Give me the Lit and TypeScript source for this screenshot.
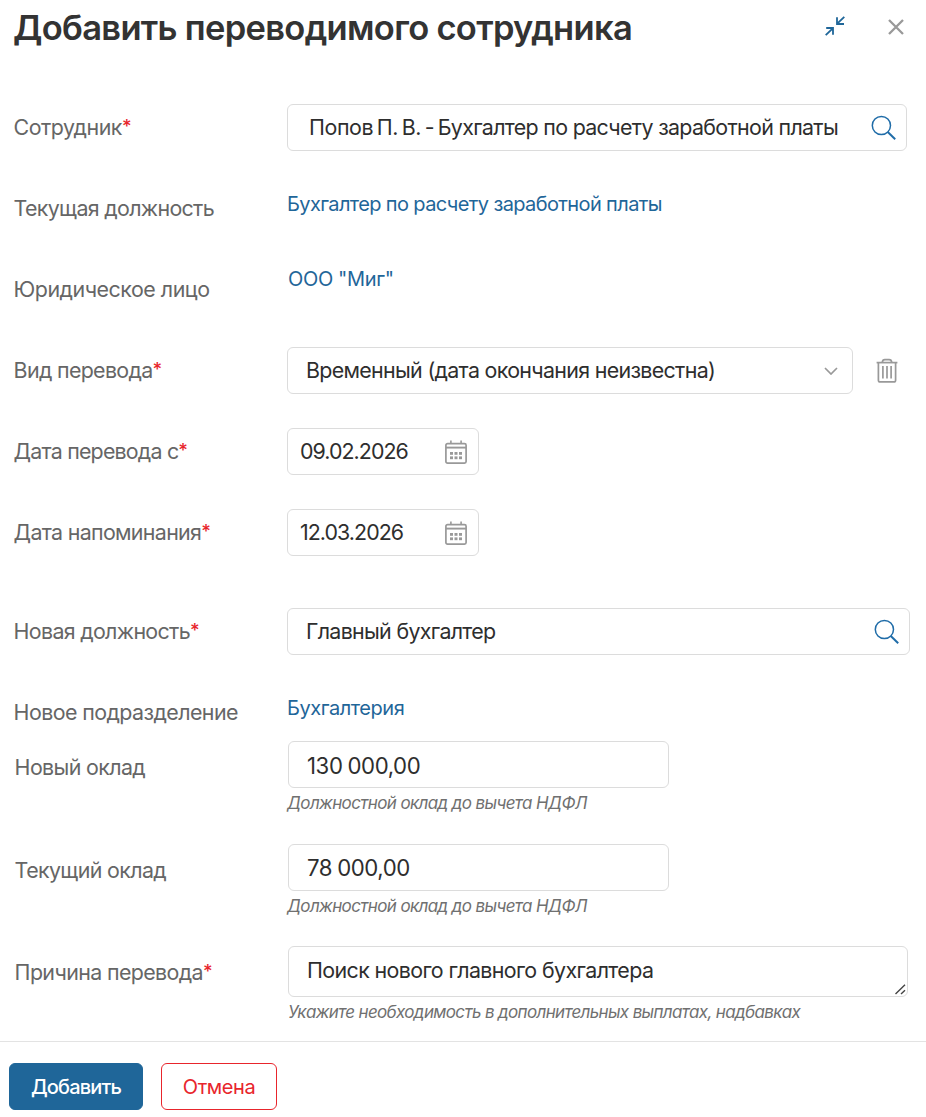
import { LitElement, html, css, svg } from "lit";
import { customElement } from "lit/decorators.js";

const searchIcon = html`<svg class="icon search" width="26" height="26" viewBox="0 0 26 26" fill="none" stroke="currentColor">
  <circle cx="10.4" cy="10.5" r="9.1" stroke-width="1.5" />
  <path d="M16.8 17L24.2 24.2" stroke-width="2" />
</svg>`;

const dots = [0, 1, 2].map((c) => [0, 1].map((r) => svg`<rect x=${5 + c * 4.5} y=${12 + r * 4.4} width="3" height="2.8" />`));
const calendarIcon = html`<svg class="icon calendar" width="22" height="25" viewBox="0 0 22 25" fill="none" stroke="currentColor">
  <rect x="0.9" y="3.6" width="20.2" height="19.6" rx="1.6" stroke-width="1.7" />
  <path d="M1 7.6H21" stroke-width="1.9" />
  <path d="M5.9 0.5V4M16.1 0.5V4" stroke-width="1.6" />
  <g fill="currentColor" stroke="none">${dots}</g>
</svg>`;

const trashIcon = html`<svg class="icon trash" width="22" height="26" viewBox="0 0 22 26" fill="none" stroke="currentColor" stroke-width="1.7">
  <path d="M0.6 4.6H21.4" />
  <path d="M6.3 4.4C6.5 2.3 7.6 1.7 8.8 1.7H13.2C14.4 1.7 15.5 2.3 15.7 4.4" />
  <path d="M2.4 4.8V22.2C2.4 23.4 3 23.9 4.2 23.9H17.8C19 23.9 19.6 23.4 19.6 22.2V4.8" />
  <path d="M6.9 8V20.6M11 8V20.6M15.1 8V20.6" />
</svg>`;

const label = (text: string, required = false) =>
  html`<label class="label">${text}${required ? html`<span class="star">*</span>` : ""}</label>`;

@customElement("app-root")
export class AppRoot extends LitElement {
  static styles = css`
    :host {
      display: block;
      font-family: Inter, "Liberation Sans", sans-serif;
      font-size: 21.4px;
      letter-spacing: -0.68px;
      color: #2e2e2e;
      background: #fff;
    }
    * { box-sizing: border-box; }
    .dialog { display: flex; flex-direction: column; height: 1117px; overflow: hidden; }
    .header { display: flex; align-items: center; height: 56px; padding: 0 22px 0 13px; }
    .title { flex: 1; margin: 0; font-size: 34.5px; font-weight: 600; line-height: 56px; letter-spacing: -0.69px; color: #333; white-space: nowrap; }
    .collapse { color: #1f6699; margin: 0 43px 4px 0; }
    .close { color: #999; margin-bottom: 2px; }
    .icon { display: block; flex: none; }
    .form { padding: 48px 16px 0 14px; height: 985px; }
    .row { display: grid; grid-template-columns: 273px 1fr; align-items: start; margin-bottom: 34px; }
    .label { color: #666; line-height: 47px; white-space: nowrap; margin-left: -0.4px; }
    .person .label { letter-spacing: -0.5px; }
    .legal .label { letter-spacing: -0.48px; }
    .starts .label { letter-spacing: -0.8px; }
    .department .label { letter-spacing: -0.58px; }
    .salary .label { letter-spacing: -0.62px; }
    .star { color: #e8252c; display: inline-block; font-size: 18.5px; font-weight: 500; line-height: 20px; vertical-align: 2px; }
    .box { display: flex; align-items: center; height: 47px; border: 1px solid #dcdcdc; border-radius: 6px; padding: 0 9px 0 18px; white-space: nowrap; }
    .box .value { flex: 1; line-height: 45px; }
    .employee { width: 620px; padding-left: 21px; }
    .name { letter-spacing: -0.4px; word-spacing: -2px; }
    .position { width: 623px; }
    .link { color: #1f6699; line-height: 38px; font-size: 20px; letter-spacing: -0.62px; white-space: nowrap; }
    .link.entity { line-height: 26px; padding-left: 1px; letter-spacing: -0.35px; }
    .department .link { letter-spacing: -0.45px; }
    .search { color: #1f6ca8; }
    .choice { display: flex; align-items: center; gap: 23px; }
    .select { width: 566px; padding-right: 14px; }
    .chevron { color: #999; }
    .trash, .calendar { color: #999; }
    .calendar { margin-top: 1px; }
    .date { width: 192px; padding: 0 11px 0 12px; letter-spacing: -0.95px; }
    .section { margin-bottom: 52px; }
    .department { margin-bottom: 5px; }
    .salary { padding-left: 1px; margin-bottom: 0; height: 103px; }
    .salary .label { padding-top: 3px; }
    .money { width: 381px; font-size: 22.2px; letter-spacing: -0.42px; word-spacing: -0.8px; }
    .money .value { padding-top: 1px; }
    .current { height: 102px; }
    .current .money .value { padding: 0; }
    .hint { color: #707070; font-size: 17px; font-style: italic; letter-spacing: -0.63px; line-height: 22px; margin: 4px 0 0 -1px; white-space: nowrap; }
    .comment .hint { margin-left: 0; letter-spacing: -0.65px; }
    .reason { position: relative; width: 620px; height: 51px; padding-bottom: 3px; letter-spacing: -0.61px; }
    .grip { position: absolute; right: 1px; bottom: 1px; color: #444; }
    .footer { display: flex; gap: 18px; height: 76px; padding: 21px 9px 0; border-top: 1px solid #e3e3e3; }
    .button { height: 47px; border-radius: 6px; font: inherit; font-size: 20px; padding: 0; border: 1px solid #1f6699; }
    .primary { width: 134px; background: #1f6699; color: #fff; font-weight: 500; letter-spacing: -0.83px; }
    .cancel { width: 116px; background: #fff; color: #e8252c; border-color: #e8252c; letter-spacing: -0.45px; }
  `;

  render() {
    return html`<div class="dialog">
      <header class="header">
        <h1 class="title">Добавить переводимого сотрудника</h1>
        <svg class="icon collapse" width="20" height="20" viewBox="0 0 20 20" fill="none" stroke="currentColor" stroke-width="1.8">
          <path d="M19.3 0.8L12.2 7.7M12 1.2V8H19M0.7 19.2L7.8 12.3M1.2 12H8V18.8" />
        </svg>
        <svg class="icon close" width="16" height="16" viewBox="0 0 16 16" fill="none" stroke="currentColor" stroke-width="2.3">
          <path d="M1 1L15 15M15 1L1 15" />
        </svg>
      </header>
      <main class="form">
        <div class="row person">${label("Сотрудник", true)}
          <div class="box employee"><span class="value"><span class="name">Попов П. В. - </span>Бухгалтер по расчету заработной платы</span>${searchIcon}</div>
        </div>
        <div class="row">${label("Текущая должность")}<a class="link">Бухгалтер по расчету заработной платы</a></div>
        <div class="row legal">${label("Юридическое лицо")}<a class="link entity">ООО "Миг"</a></div>
        <div class="row">${label("Вид перевода", true)}
          <div class="choice">
            <div class="box select"><span class="value">Временный (дата окончания неизвестна)</span>
              <svg class="icon chevron" width="14" height="8" viewBox="0 0 14 8" fill="none" stroke="currentColor" stroke-width="1.7"><path d="M1 1L7 7L13 1" /></svg>
            </div>${trashIcon}
          </div>
        </div>
        <div class="row starts">${label("Дата перевода с", true)}<div class="box date"><span class="value">09.02.2026</span>${calendarIcon}</div></div>
        <div class="row section">${label("Дата напоминания", true)}<div class="box date"><span class="value">12.03.2026</span>${calendarIcon}</div></div>
        <div class="row">${label("Новая должность", true)}<div class="box position"><span class="value">Главный бухгалтер</span>${searchIcon}</div></div>
        <div class="row department">${label("Новое подразделение")}<a class="link">Бухгалтерия</a></div>
        <div class="row salary">${label("Новый оклад")}
          <div><div class="box money"><span class="value">130 000,00</span></div><div class="hint">Должностной оклад до вычета НДФЛ</div></div>
        </div>
        <div class="row salary current">${label("Текущий оклад")}
          <div><div class="box money"><span class="value">78 000,00</span></div><div class="hint">Должностной оклад до вычета НДФЛ</div></div>
        </div>
        <div class="row salary comment">${label("Причина перевода", true)}
          <div>
            <div class="box reason"><span class="value">Поиск нового главного бухгалтера</span>
              <svg class="icon grip" width="11" height="11" viewBox="0 0 11 11" fill="none" stroke="currentColor" stroke-width="1.4"><path d="M0.5 10L10 0.8M6 10L10 6.2" /></svg>
            </div>
            <div class="hint">Укажите необходимость в дополнительных выплатах, надбавках</div>
          </div>
        </div>
      </main>
      <footer class="footer"><button class="button primary">Добавить</button><button class="button cancel">Отмена</button></footer>
    </div>`;
  }
}
